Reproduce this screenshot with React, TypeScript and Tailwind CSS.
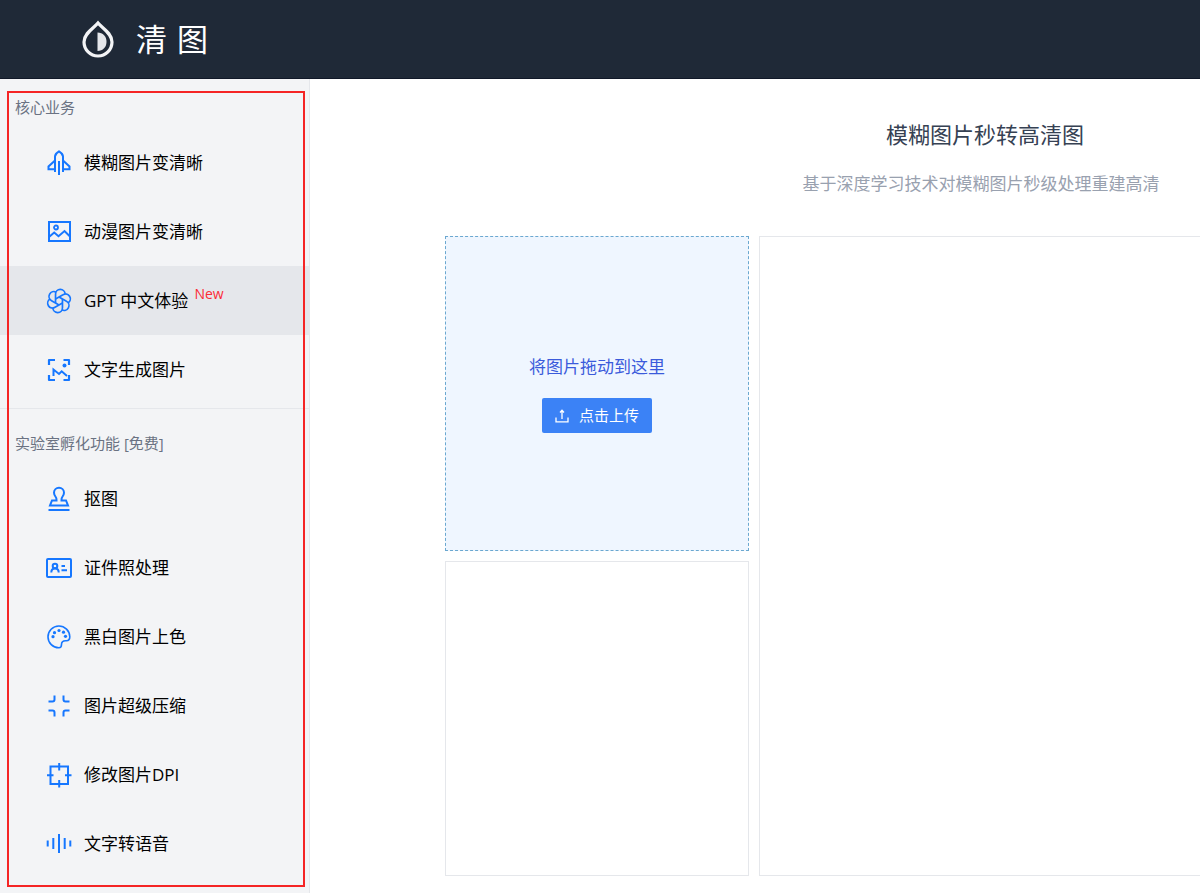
import type { ReactNode } from "react";
import { clsx } from "clsx";

interface MenuItem {
  label: string;
  icon: ReactNode;
  active?: boolean;
  badge?: string;
}

function LineIcon({ children }: { children: ReactNode }) {
  return (
    <svg className="size-[26px]" viewBox="0 0 26 26" fill="none" stroke="currentColor" strokeWidth={2} aria-hidden="true">
      {children}
    </svg>
  );
}

// One strand of the knot, repeated every 60 degrees
const strandAngles = [0, 60, 120, 180, 240, 300];

const coreItems: MenuItem[] = [
  {
    label: "模糊图片变清晰",
    icon: (
      <LineIcon>
        <path d="M9 22V6.500c0-2 2-4 4-5.200 2 1.200 4 3.200 4 5.200V22" />
        <path d="M9 10.500l-6.500 6v2.800H9M17 10.500l6.500 6v2.800H17M13 11v14" />
      </LineIcon>
    ),
  },
  {
    label: "动漫图片变清晰",
    icon: (
      <LineIcon>
        <rect x="3" y="3" width="21" height="19" />
        <circle cx="10" cy="8.500" r="2" strokeWidth={1.800} />
        <path d="M3 18l5.200-4.500 4.300 3.700 6-5.200L24 17.500" />
      </LineIcon>
    ),
  },
  {
    label: "GPT 中文体验",
    icon: (
      <LineIcon>
        {strandAngles.map((angle) => (
          <path
            key={angle}
            d="M9.500 11L17 6.700A4.800 4.800 0 0 1 22 14.900"
            strokeWidth={1.700}
            transform={`rotate(${angle} 13 13)`}
          />
        ))}
      </LineIcon>
    ),
    active: true,
    badge: "New",
  },
  {
    label: "文字生成图片",
    icon: (
      <LineIcon>
        <path d="M3 8V3h6M17.500 3H23v5M23 18v5h-5.500M9 23H3v-5" strokeWidth={2.200} strokeLinejoin="round" />
        <path d="M7.500 19v-6.500l5.500 4.500 2.700-2.700 5.300 4.700" />
        <circle cx="18.500" cy="8.500" r="2" fill="currentColor" stroke="none" />
      </LineIcon>
    ),
  },
];

const labItems: MenuItem[] = [
  {
    label: "抠图",
    icon: (
      <LineIcon>
        <path d="M10.500 14.500c0-1.500.2-2.200-.8-3.500C8.700 9.700 8 8.500 8 6.800a5 5 0 0 1 10 0c0 1.700-.7 2.900-1.700 4.200-1 1.300-.8 2-.8 3.500h4.500l2 5H4l2-5z" />
        <path d="M2.500 24h21" />
      </LineIcon>
    ),
  },
  {
    label: "证件照处理",
    icon: (
      <LineIcon>
        <rect x="1" y="4" width="24" height="18" rx="1" />
        <circle cx="9" cy="11" r="2.300" />
        <path d="M5.300 17.500c0-2.500 1.500-4 3.700-4s3.700 1.500 3.700 4M15.500 11h3.500M15.500 15.300h5.500" />
      </LineIcon>
    ),
  },
  {
    label: "黑白图片上色",
    icon: (
      <LineIcon>
        <path d="M15.500 20.500c0-2.500 1.500-3.800 4-3.800h1c2 0 3.300-1.700 3.300-3.900A10.900 10.900 0 1 0 13 23.800c1.800 0 2.500-1 2.500-3.300z" strokeWidth={1.600} />
        <g fill="currentColor" stroke="none">
          <circle cx="7" cy="12.700" r="1.600" />
          <circle cx="8.500" cy="8.700" r="1.600" />
          <circle cx="13" cy="6.500" r="1.600" />
          <circle cx="17.500" cy="8.200" r="1.600" />
          <circle cx="19.500" cy="12.300" r="1.600" />
        </g>
      </LineIcon>
    ),
  },
  {
    label: "图片超级压缩",
    icon: (
      <LineIcon>
        <path d="M2.500 8.500h4a2 2 0 0 0 2-2v-4M17.500 2.500v4a2 2 0 0 0 2 2h4M23.500 17.500h-4a2 2 0 0 0-2 2v4M8.500 23.500v-4a2 2 0 0 0-2-2h-4" />
      </LineIcon>
    ),
  },
  {
    label: "修改图片DPI",
    icon: (
      <LineIcon>
        <rect x="4.500" y="4.500" width="17.500" height="17.500" />
        <path d="M13.200 1v7.500M13.200 18v7.500M1 13.200h6.500M19 13.200h6.500" />
      </LineIcon>
    ),
  },
  {
    label: "文字转语音",
    icon: (
      <LineIcon>
        <path d="M1.700 9.500v6M7.300 7v11M13 3v19M18.700 7v11M24.300 9.500v6" />
      </LineIcon>
    ),
  },
];

function Logo() {
  return (
    <svg className="h-[38px] w-8" viewBox="0 0 32 38" fill="none" aria-hidden="true">
      <path
        d="M16 3C12.500 7.500 2 13 2 22a14 14 0 0 0 28 0C30 13 19.500 7.500 16 3z"
        stroke="#f3f4f6"
        strokeWidth={3.200}
      />
      <path d="M15.500 12.500c5.500 0 9 4 9 9.200s-3.500 9.300-9 9.300z" fill="#e5e7eb" />
    </svg>
  );
}

function MenuSection({ title, items }: { title: string; items: MenuItem[] }) {
  return (
    <section>
      <h2 className="pl-[15px] text-[15px] leading-[41px] text-gray-500">{title}</h2>
      <ul>
        {items.map((item) => (
          <li key={item.label}>
            <a
              href="#"
              aria-current={item.active ? "page" : undefined}
              className={clsx("flex h-[69px] items-center gap-3 pl-[46px] text-[17px] text-black", item.active && "bg-gray-200")}
            >
              <span className="text-[#1677ff]">{item.icon}</span>
              <span>{item.label}</span>
              {item.badge && <sup className="-ml-1.5 text-[14px] text-red-500">{item.badge}</sup>}
            </a>
          </li>
        ))}
      </ul>
    </section>
  );
}

export default function App() {
  return (
    <div className="flex min-h-screen flex-col overflow-hidden bg-white font-['Open_Sans','Noto_Sans_CJK_SC',sans-serif]">
      <header className="flex h-[79px] items-center gap-[22px] border-b border-gray-900 bg-[#1f2937] pl-[82px]">
        <Logo />
        <span className="flex gap-2.5 text-[31px] text-white">
          <span>清</span>
          <span>图</span>
        </span>
      </header>

      <div className="flex flex-1">
        <aside className="relative w-[310px] shrink-0 border-r border-gray-200 bg-gray-100 pt-2">
          <nav>
            <MenuSection title="核心业务" items={coreItems} />
            <hr className="mt-1 mb-3.5 border-gray-200" />
            <MenuSection title="实验室孵化功能 [免费]" items={labItems} />
          </nav>
          {/* Highlight frame over the menu */}
          <div className="pointer-events-none absolute top-3 right-1 bottom-1.5 left-[7px] border-2 border-[#f52525]" />
        </aside>

        <main className="min-w-[1342px] flex-1 px-[135px] pt-10">
          <h1 className="pl-2 text-center text-[22px] leading-[30px] text-gray-700">模糊图片秒转高清图</h1>
          <p className="mt-[22px] text-center text-[17px] leading-[26px] text-gray-400">
            基于深度学习技术对模糊图片秒级处理重建高清
          </p>

          <div className="mt-[39px] flex gap-2.5">
            <div className="flex w-[304px] flex-col gap-2.5">
              <div className="flex h-[315px] flex-col items-center justify-center gap-[18px] border border-dashed border-[#6ba8d0] bg-[#eff6ff]">
                <p className="text-[17px] leading-[26px] text-[#3b5bdb]">将图片拖动到这里</p>
                <button type="button" className="flex h-[35px] w-[110px] items-center justify-center gap-2.5 rounded-xs bg-[#3b82f6] text-[15px] text-white">
                  <svg className="size-3.5" viewBox="0 0 14 14" fill="none" stroke="currentColor" strokeWidth={1.3} aria-hidden="true">
                    <path d="M1 8.500v4.300h12V8.500M7 10V1.500M5 3.500l2-2.200 2 2.200" />
                  </svg>
                  点击上传
                </button>
              </div>
              <div className="h-[315px] border border-gray-200" />
            </div>
            <div className="flex-1 border border-gray-200" />
          </div>
        </main>
      </div>
    </div>
  );
}
